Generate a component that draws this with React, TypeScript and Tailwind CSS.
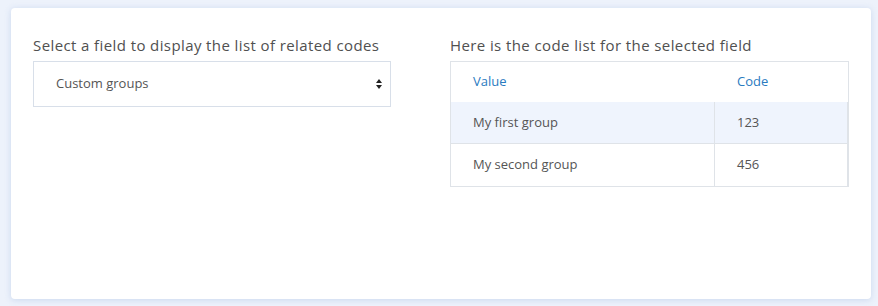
const rows = [
  { value: "My first group", code: "123" },
  { value: "My second group", code: "456" },
];

export default function App() {
  return (
    <div className="h-[306px] w-[878px] bg-[#edf2fb] pt-2 pl-[11px] pr-[7px] pb-[7px] font-['Open_Sans',sans-serif]">
      <div className="flex h-full gap-[59px] rounded bg-white px-[22px] pt-[27px] shadow-[0_1px_6px_rgba(160,185,225,0.45)]">
        <div className="w-[358px]">
          <h2 className="text-[15px] font-medium tracking-[0.4px] text-[#505050] leading-[20px] mb-[6px]">
            Select a field to display the list of related codes
          </h2>
          <div className="flex h-[46px] items-center justify-between border border-[#d8dfe9] pl-[22px] pr-[7px] text-[13px] text-[#555]">
            <span>Custom groups</span>
            <svg width="8" height="12" viewBox="0 0 8 12" className="fill-[#222]">
              <path d="M4 1 L7 5 L1 5 Z" />
              <path d="M1 7 L7 7 L4 11 Z" />
            </svg>
          </div>
        </div>
        <div className="w-[399px]">
          <h2 className="text-[15px] font-medium tracking-[0.4px] text-[#505050] leading-[20px] mb-[6px]">
            Here is the code list for the selected field
          </h2>
          <div className="border border-[#dfe3e8] text-[13px]">
            <div className="grid h-[40px] grid-cols-[264px_1fr] items-center text-[#2a7bbf]">
              <span className="pl-[22px]">Value</span>
              <span className="pl-[22px]">Code</span>
            </div>
            {rows.map((r, i) => (
              <div
                key={r.code}
                className={`grid h-[42px] grid-cols-[264px_1fr] items-center border-r border-[#dfe3e8] text-[#555] ${
                  i === 0 ? "bg-[#eff4fd] border-b" : ""
                }`}
              >
                <span className="flex h-full items-center border-r border-[#dfe3e8] pl-[22px]">{r.value}</span>
                <span className="pl-[22px]">{r.code}</span>
              </div>
            ))}
          </div>
        </div>
      </div>
    </div>
  );
}
